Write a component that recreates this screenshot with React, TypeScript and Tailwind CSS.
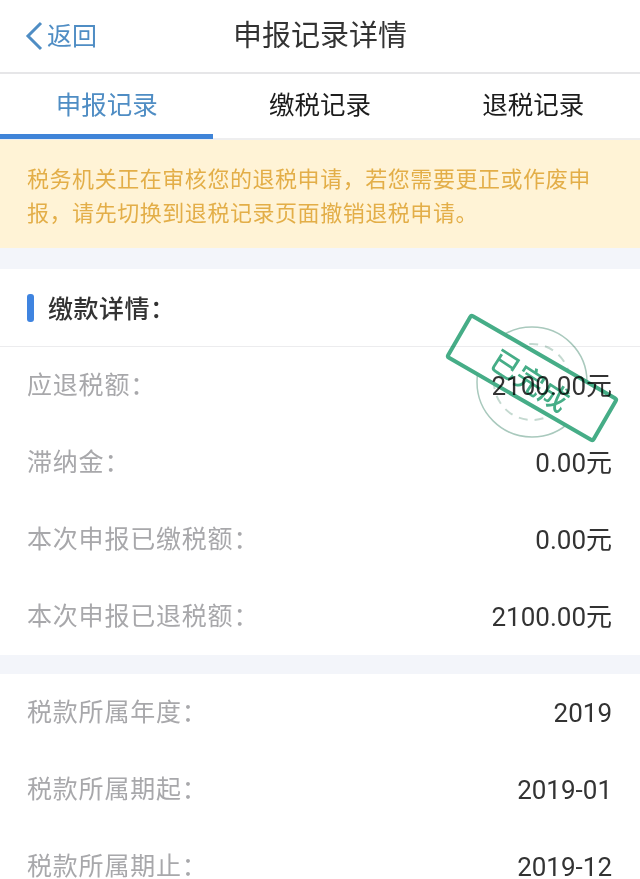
const font = { fontFamily: '"Roboto", "Noto Sans CJK SC", sans-serif' };

function Row({ label, value }: { label: string; value: string }) {
  return (
    <div className="flex h-[77px] items-center justify-between pl-[27px] pr-[28px]">
      <span className="text-[25px] leading-none tracking-[0.8px] text-[#a8a8ab]">{label}</span>
      <span className="text-[26px] leading-none text-[#333333]">{value}</span>
    </div>
  );
}

function Stamp() {
  return (
    <div className="absolute left-[440px] top-[305px] h-[145px] w-[200px] mix-blend-multiply">
      <svg width="200" height="145" viewBox="0 0 200 145" fill="none">
        <circle cx="92" cy="77" r="55" stroke="#a9c9bd" strokeWidth="1.5" />
        <circle cx="92" cy="77" r="38" stroke="#c4d9d0" strokeWidth="2" strokeDasharray="9 7" />
      </svg>
      <div className="absolute left-[6px] top-[47px] flex h-[52px] w-[172px] rotate-[30deg] items-center justify-center rounded-[4px] border-[4px] border-[#46ad87] bg-white">
        <span className="translate-y-[4px] rotate-[3deg] text-[29px] font-medium leading-none text-[#46ad87]">已完成</span>
      </div>
    </div>
  );
}

export default function App() {
  return (
    <div className="relative h-[879px] w-full overflow-hidden bg-white" style={font}>
      <div className="relative flex h-[74px] items-center justify-center border-b-2 border-[#e6e6e8] pt-[1px]">
        <div className="absolute left-[25px] top-[21px] flex items-center gap-[4px] text-[#4f8dc4]">
          <svg width="18" height="30" viewBox="0 0 18 30" fill="none">
            <path d="M16 2 L3 15 L16 28" stroke="#4f8dc4" strokeWidth="3" />
          </svg>
          <span className="text-[25px] leading-none">返回</span>
        </div>
        <span className="text-[29px] leading-none text-[#333333]">申报记录详情</span>
      </div>

      <div className="flex h-[66px] border-b-2 border-[#eeeeef]">
        <div className="relative flex flex-1 items-center justify-center text-[#4f8dc4]">
          <span className="text-[25.5px] leading-none">申报记录</span>
          <div className="absolute bottom-[-1px] left-0 h-[5px] w-full bg-[#3f84d8]" />
        </div>
        <div className="flex flex-1 items-center justify-center text-[25.5px] leading-none text-[#1c1c1c]">缴税记录</div>
        <div className="flex flex-1 items-center justify-center text-[25.5px] leading-none text-[#1c1c1c]">退税记录</div>
      </div>

      <div className="flex h-[108px] items-center bg-[#fff3d6] pl-[27px] pr-[40px] pt-[5px]">
        <p className="text-[22px] leading-[34px] tracking-[0.55px] text-[#e3ae48]">
          税务机关正在审核您的退税申请，若您需要更正或作废申报，请先切换到退税记录页面撤销退税申请。
        </p>
      </div>

      <div className="h-[21px] bg-[#f3f5fa]" />

      <div className="flex h-[78px] items-center gap-[14px] border-b border-[#ececee] pl-[27px]">
        <div className="h-[28px] w-[7px] rounded-[3px] bg-[#3f84e0]" />
        <span className="pt-[3px] text-[25px] font-medium leading-none tracking-[0.5px] text-[#333333]">缴款详情：</span>
      </div>

      <Row label="应退税额：" value="2100.00元" />
      <Row label="滞纳金：" value="0.00元" />
      <Row label="本次申报已缴税额：" value="0.00元" />
      <Row label="本次申报已退税额：" value="2100.00元" />

      <div className="h-[19px] bg-[#f3f5fa]" />

      <Row label="税款所属年度：" value="2019" />
      <Row label="税款所属期起：" value="2019-01" />
      <Row label="税款所属期止：" value="2019-12" />

      <Stamp />
    </div>
  );
}
